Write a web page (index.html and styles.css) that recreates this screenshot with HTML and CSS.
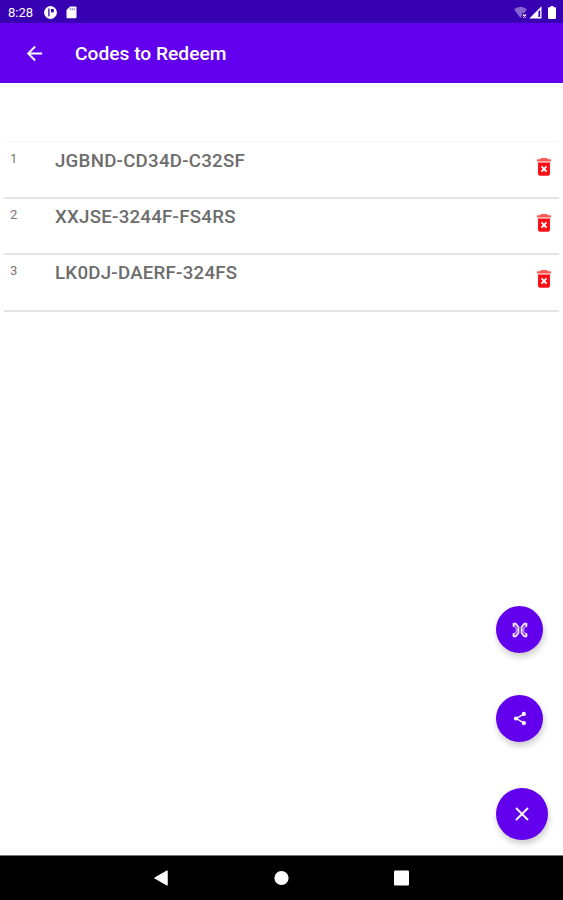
FILE: index.html
```html
<!DOCTYPE html>
<html lang="en">
<head>
  <meta charset="UTF-8" />
  <meta name="viewport" content="width=device-width, initial-scale=1.0"/>
  <title>Codes to Redeem</title>
  <link rel="stylesheet" href="styles.css">
</head>
<body>
  <div class="status-bar">
    <span class="time">8:28</span>
    <svg class="status-app" width="13" height="13" viewBox="0 0 13 13">
      <circle cx="6.5" cy="6.5" r="6.4" fill="#fff"/>
      <path d="M4.9 2.6v7.6" stroke="#3700b3" stroke-width="1.3"/>
      <path d="M7 3h2.8v3.4H7z" fill="#3700b3"/>
    </svg>
    <svg class="status-card" width="11" height="13" viewBox="0 0 11 13">
      <path d="M4 .5h5.7q.8 0 .8.8v10.2q0 .8-.8.8H1.3q-.8 0-.8-.8V4z" fill="#fff"/>
      <path d="M4.4 2.2v2M6.3 2.2v2M8.2 2.2v2" stroke="#3700b3" stroke-width=".6"/>
    </svg>
    <div class="status-right">
      <svg width="13" height="13" viewBox="0 0 13 13">
        <path d="M0 3.2Q6.5-1.8 13 3.2L6.5 12z" fill="#8566d2"/>
        <path d="M8 7h5v6H8z" fill="#3700b3"/>
        <path d="M9 8.5l3 3M12 8.5l-3 3" stroke="#fff" stroke-width="1.1"/>
      </svg>
      <svg width="13" height="13" viewBox="0 0 13 13">
        <path d="M.3 12.5L12.5.3v12.2z" fill="#fff"/>
        <path d="M9.4 5.6l1.8-1.8v7.2H9.4z" fill="#3700b3"/>
      </svg>
      <svg class="battery" width="8" height="13" viewBox="0 0 8 13">
        <path d="M2.5 0h3v1.3h1.7q.8 0 .8.8v10q0 .8-.8.8H.8q-.8 0-.8-.8v-10q0-.8.8-.8h1.7z" fill="#fff"/>
      </svg>
    </div>
  </div>

  <header>
    <svg width="24" height="24" viewBox="0 0 24 24">
      <path d="M20 11H7.8l5.6-5.6L12 4l-8 8 8 8 1.4-1.4L7.8 13H20z" fill="#fff"/>
    </svg>
    <h1>Codes to Redeem</h1>
  </header>

  <svg class="symbols">
    <symbol id="trash" viewBox="0 0 14 18">
      <path d="M4 0h6l.8 1.2H14v2.4H0V1.2h3.2z" fill="#ff5a55"/>
      <path d="M1 4.6h12v11.2q0 2-2 2H3q-2 0-2-2z" fill="#fb1015"/>
      <path d="M4.5 8.4l5 5.2M9.5 8.4l-5 5.2" stroke="#fff" stroke-width="1.8"/>
    </symbol>
  </svg>

  <main>
    <ul class="codes">
      <li>
        <span class="number">1</span>
        <span class="code">JGBND-CD34D-C32SF</span>
        <svg class="delete"><use href="#trash"/></svg>
      </li>
      <li>
        <span class="number">2</span>
        <span class="code">XXJSE-3244F-FS4RS</span>
        <svg class="delete"><use href="#trash"/></svg>
      </li>
      <li>
        <span class="number">3</span>
        <span class="code">LK0DJ-DAERF-324FS</span>
        <svg class="delete"><use href="#trash"/></svg>
      </li>
    </ul>

    <div class="actions">
      <button class="fab" aria-label="Scan">
        <svg width="16" height="16" viewBox="0 0 16 16" fill="none" stroke="#fff" stroke-linecap="round" stroke-linejoin="round">
          <path d="M1.6 4V1.8h2.2L6.4 5v6l-2.6 3.2H1.6V12M14.4 4V1.8h-2.2L9.6 5v6l2.6 3.2h2.2V12" stroke-width="1.9" opacity=".9"/>
          <path d="M2 4l2.2 1.8v4.4L2 12M14 4l-2.2 1.8v4.4L14 12M4.2 8h2M9.8 8h2" stroke-width="1.1" opacity=".65"/>
        </svg>
      </button>
      <button class="fab" aria-label="Share">
        <svg width="14" height="15" viewBox="0 0 16 16" fill="#fff">
          <path d="M12.3 3L3.7 8l8.6 5" fill="none" stroke="#fff" stroke-width="1.6"/>
          <circle cx="12.4" cy="2.8" r="2.4"/>
          <circle cx="3.4" cy="8" r="2.4"/>
          <circle cx="12.4" cy="13.2" r="2.4"/>
        </svg>
      </button>
      <button class="fab fab-main" aria-label="Close">
        <svg width="14" height="14" viewBox="0 0 14 14">
          <path d="M1 1l12 12M13 1L1 13" stroke="#fff" stroke-width="1.8"/>
        </svg>
      </button>
    </div>
  </main>

  <footer>
    <svg width="15" height="16" viewBox="0 0 15 16"><path d="M.6 8L13.2.8v14.4z" fill="#fff" stroke="#fff" stroke-linejoin="round"/></svg>
    <svg width="15" height="16" viewBox="0 0 15 16"><circle cx="7.5" cy="8" r="7.1" fill="#fff"/></svg>
    <svg width="15" height="16" viewBox="0 0 15 16"><rect y=".5" width="15" height="15" rx="1.2" fill="#fff"/></svg>
  </footer>
</body>
</html>
```
FILE: styles.css
```css
* {
  box-sizing: border-box;
}
body {
  display: flex;
  flex-direction: column;
  height: 900px;
  margin: 0;
  background-color: white;
  font-family: Roboto, 'Liberation Sans', sans-serif;
  overflow: hidden;
}
svg {
  display: block;
  flex: none;
}
.symbols {
  display: none;
}
.status-bar {
  display: flex;
  align-items: center;
  height: 23px;
  padding: 1px 7px 0 8px;
  background-color: #3700b3;
  color: white;
}
.time {
  width: 36px;
  padding-top: 1px;
  font-size: 13px;
  line-height: 22px;
}
.status-card {
  margin-left: 9px;
}
.status-right {
  display: flex;
  gap: 2px;
  margin-left: auto;
}
.battery {
  margin-left: 4px;
}
header {
  display: flex;
  align-items: center;
  height: 60px;
  padding: 0 23px;
  background-color: #6200ee;
  color: white;
}
header svg {
  width: 23px;
  height: 23px;
}
h1 {
  margin: 2px 0 0 29px;
  font-size: 19.2px;
  font-weight: 500;
  line-height: 24px;
}
main {
  display: flex;
  flex: 1;
  flex-direction: column;
  justify-content: space-between;
  padding-top: 58px;
}
.codes {
  margin: 0 4px;
  padding: 0;
  border-top: 1px solid #f7f7f7;
  list-style: none;
}
.codes li {
  display: flex;
  align-items: flex-start;
  height: 56.4px;
  padding: 8px 8px 0 6px;
  border-bottom: 2px solid #e4e4e4;
  color: #6d6d6d;
}
.codes li:first-child {
  height: 57px;
}
.codes li + li {
  padding-top: 7px;
}
.number {
  width: 45px;
  padding-top: 1px;
  color: #777;
  font-size: 13px;
  line-height: 16px;
}
.code {
  font-size: 18.7px;
  font-weight: 500;
  letter-spacing: 0.24px;
  line-height: 22px;
}
.delete {
  width: 14px;
  height: 18px;
  margin: 8px 0 0 auto;
}
.actions {
  display: flex;
  flex-direction: column;
  align-items: center;
  align-self: flex-end;
  margin: 0 15px 15px 0;
}
.fab {
  display: flex;
  align-items: center;
  justify-content: center;
  width: 47px;
  height: 47px;
  margin: 0 5px 42px 0;
  padding: 0;
  border: none;
  border-radius: 50%;
  background-color: #6200ee;
  box-shadow: 1px 4px 6px rgba(0, 0, 0, 0.2);
}
.fab-main {
  width: 52px;
  height: 52px;
  margin: 4px 0 0;
}
footer {
  display: flex;
  align-items: center;
  justify-content: center;
  gap: 105px;
  height: 45px;
  border-top: 1px solid #777;
  background-color: black;
}
```
